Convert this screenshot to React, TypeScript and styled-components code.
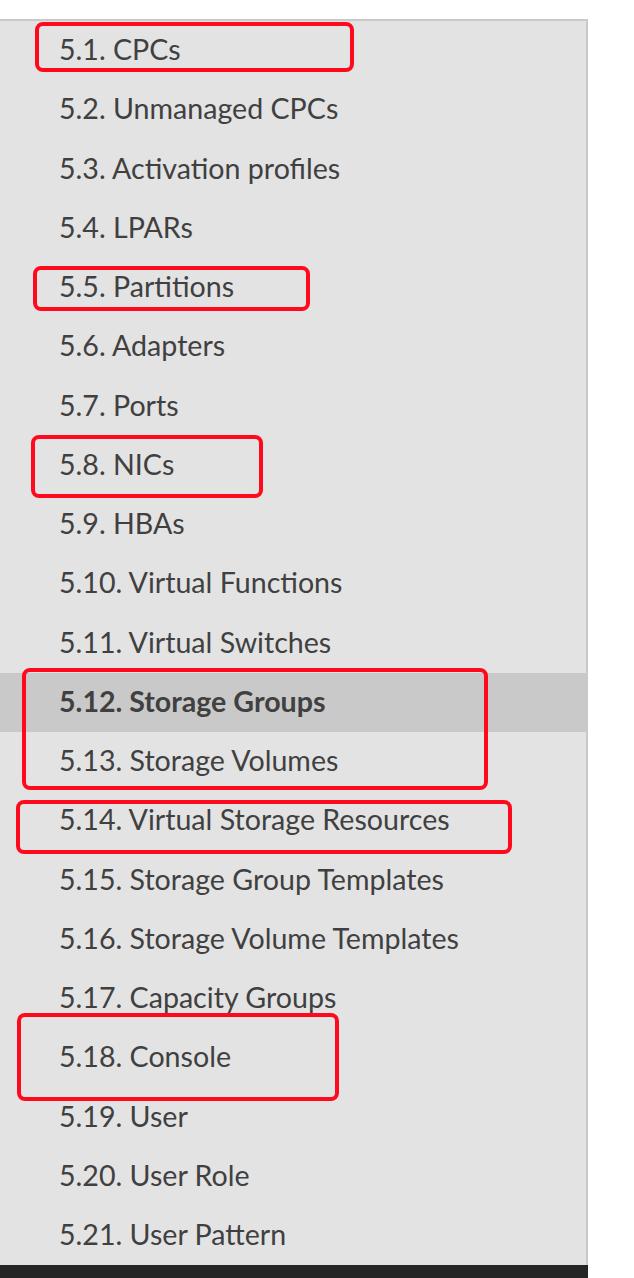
import * as React from 'react'
import styled, { createGlobalStyle } from 'styled-components'

const GlobalStyle = createGlobalStyle`
html, body {
  margin: 0;
  padding: 0;
  background: #fff;
}
body {
  font-family: Lato, "Open Sans", sans-serif;
}
`

const Page = styled.div`
position: relative;
width: 634px;
height: 1278px;
padding-top: 19px;
box-sizing: border-box;
display: flex;
flex-direction: column;
overflow: hidden;
`

const Sidebar = styled.nav`
width: 588px;
box-sizing: border-box;
flex: 1;
background: #e3e3e3;
border-top: 2px solid #c9c9c9;
border-right: 2px solid #c9c9c9;
`

const TocList = styled.ul`
list-style: none;
margin: 0;
padding: 0;
`

const TocItem = styled.li<{ $current?: boolean }>`
height: 59.25px;
display: flex;
align-items: center;
padding-left: 59px;
padding-bottom: 3px;
box-sizing: border-box;
font-size: 28.6px;
color: #404040;
font-weight: ${p => (p.$current ? 700 : 400)};
background: ${p => (p.$current ? '#c9c9c9' : 'transparent')};
white-space: nowrap;
`

const Footer = styled.div`
width: 588px;
height: 15px;
background: #252525;
flex-shrink: 0;
`

const Marker = styled.div`
position: absolute;
box-sizing: border-box;
border: 4.5px solid #ff0a1c;
border-radius: 8px;
pointer-events: none;
`

const items = [
  '5.1. CPCs',
  '5.2. Unmanaged CPCs',
  '5.3. Activation profiles',
  '5.4. LPARs',
  '5.5. Partitions',
  '5.6. Adapters',
  '5.7. Ports',
  '5.8. NICs',
  '5.9. HBAs',
  '5.10. Virtual Functions',
  '5.11. Virtual Switches',
  '5.12. Storage Groups',
  '5.13. Storage Volumes',
  '5.14. Virtual Storage Resources',
  '5.15. Storage Group Templates',
  '5.16. Storage Volume Templates',
  '5.17. Capacity Groups',
  '5.18. Console',
  '5.19. User',
  '5.20. User Role',
  '5.21. User Pattern',
]

// annotation boxes drawn over the list: [left, top, right, bottom]
const marks = [
  [35, 22, 354, 72],
  [33, 266, 310, 311],
  [31, 435, 263, 498],
  [22, 668, 488, 790],
  [16, 800, 512, 854],
  [17, 1013, 339, 1101],
]

export default function App() {
  return (
    <Page>
      <GlobalStyle />
      <Sidebar>
        <TocList>
          {items.map(label => (
            <TocItem key={label} $current={label.startsWith('5.12.')}>{label}</TocItem>
          ))}
        </TocList>
      </Sidebar>
      <Footer />
      {marks.map(([l, t, r, b], i) => (
        <Marker key={i} style={{ left: l, top: t, width: r - l, height: b - t }} />
      ))}
    </Page>
  )
}
